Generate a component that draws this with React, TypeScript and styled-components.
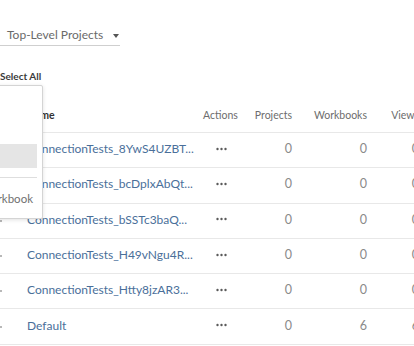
import React from 'react';
import styled, { createGlobalStyle } from 'styled-components';

const GlobalStyle = createGlobalStyle`
  html, body {
    margin: 0;
    padding: 0;
    background: #fff;
  }
  body {
    font-family: Lato, "Open Sans", sans-serif;
    color: #333;
  }
`;

const Page = styled.div`
  position: relative;
  width: 414px;
  height: 346px;
  overflow: hidden;
  background: #fff;
`;

const Toolbar = styled.div`
  padding-top: 27px;
  height: 46px;
  box-sizing: border-box;
`;

const ProjectSelect = styled.div`
  display: flex;
  align-items: center;
  gap: 10px;
  width: 120px;
  box-sizing: border-box;
  padding: 0 0 3px 7px;
  border-bottom: 1px solid #cfcfcf;
  font-size: 12px;
  color: #6a6a6a;
  white-space: nowrap;
`;

const Caret = styled.span`
  width: 0;
  height: 0;
  border-left: 3.5px solid transparent;
  border-right: 3.5px solid transparent;
  border-top: 4px solid #555;
  margin-top: 2px;
`;

const SelectAll = styled.div`
  margin-top: 24px;
  height: 12px;
  line-height: 12px;
  font-size: 10px;
  font-weight: 700;
  color: #3a3a3a;
`;

const Table = styled.div`
  margin-top: 18px;
  width: 440px;
`;

const Row = styled.div<{ $header?: boolean }>`
  display: grid;
  grid-template-columns: 27px 168px 52px 46px 75px 52px;
  align-items: center;
  height: ${({ $header }) => ($header ? '33px' : '35.3px')};
  box-sizing: border-box;
  border-bottom: 1px solid #e8e8e8;
  ${({ $header }) => $header && 'padding-bottom: 3px;'}
`;

const HeaderCell = styled.div<{ $align?: 'left' | 'center' | 'right'; $active?: boolean }>`
  font-size: 10.5px;
  text-align: ${({ $align = 'left' }) => $align};
  font-weight: ${({ $active }) => ($active ? 700 : 400)};
  color: ${({ $active }) => ($active ? '#333' : '#6d6d6d')};
  white-space: nowrap;
  padding-right: 1px;
`;

const Cell = styled.div<{ $align?: 'left' | 'center' | 'right' }>`
  font-size: 12.5px;
  color: #8a8a8a;
  text-align: ${({ $align = 'left' }) => $align};
  white-space: nowrap;
  padding-right: 1px;
  margin-top: -3px;
`;

const Marker = styled.div`
  width: 2px;
  height: 2px;
  border-radius: 1px;
  background: #a0a0a0;
`;

const NameLink = styled.a`
  font-size: 12px;
  color: #4a6f9a;
  text-decoration: none;
  white-space: nowrap;
  margin-top: -3px;
`;

const Dots = styled.svg`
  display: block;
  margin: -3px auto 0;
`;

const Menu = styled.div`
  position: absolute;
  top: 85px;
  left: -150px;
  width: 193px;
  height: 134px;
  box-sizing: border-box;
  padding: 10px 5px 0 0;
  background: #fff;
  border: 1px solid #d4d4d4;
  border-radius: 2px;
  box-shadow: 0 1px 4px rgba(0, 0, 0, 0.12);
  display: flex;
  flex-direction: column;
`;

const MenuItem = styled.div<{ $active?: boolean; $end?: boolean }>`
  height: 24px;
  display: flex;
  align-items: center;
  justify-content: ${({ $end }) => ($end ? 'flex-end' : 'flex-start')};
  padding: 0 4px 0 12px;
  font-size: 11.5px;
  color: #707070;
  background: ${({ $active }) => ($active ? '#e5e5e5' : 'transparent')};
  white-space: nowrap;
`;

const Separator = styled.div`
  height: 1px;
  margin: 9px 0 8px;
  background: #dedede;
`;

const rows = [
  { name: 'ConnectionTests_8YwS4UZBT...', projects: 0, workbooks: 0, views: 0 },
  { name: 'ConnectionTests_bcDplxAbQt...', projects: 0, workbooks: 0, views: 0 },
  { name: 'ConnectionTests_bSSTc3baQ...', projects: 0, workbooks: 0, views: 0 },
  { name: 'ConnectionTests_H49vNgu4R...', projects: 0, workbooks: 0, views: 0 },
  { name: 'ConnectionTests_Htty8jzAR3...', projects: 0, workbooks: 0, views: 0 },
  { name: 'Default', projects: 0, workbooks: 6, views: 6 },
];

const MoreIcon = () => (
  <Dots width="11" height="4" viewBox="0 0 11 4">
    <circle cx="1.5" cy="2" r="1.2" fill="#5a5a5a" />
    <circle cx="5.5" cy="2" r="1.2" fill="#5a5a5a" />
    <circle cx="9.5" cy="2" r="1.2" fill="#5a5a5a" />
  </Dots>
);

export default function App() {
  return (
    <Page>
      <GlobalStyle />
      <Toolbar>
        <ProjectSelect>
          Top-Level Projects
          <Caret />
        </ProjectSelect>
      </Toolbar>
      <SelectAll>Select All</SelectAll>
      <Table>
        <Row $header>
          <div />
          <HeaderCell $active>Name</HeaderCell>
          <HeaderCell $align="center">Actions</HeaderCell>
          <HeaderCell $align="right">Projects</HeaderCell>
          <HeaderCell $align="right">Workbooks</HeaderCell>
          <HeaderCell $align="right">Views</HeaderCell>
        </Row>
        {rows.map((row) => (
          <Row key={row.name}>
            <Marker />
            <NameLink href="#">{row.name}</NameLink>
            <MoreIcon />
            <Cell $align="right">{row.projects}</Cell>
            <Cell $align="right">{row.workbooks}</Cell>
            <Cell $align="right">{row.views}</Cell>
          </Row>
        ))}
      </Table>
      <Menu>
        <MenuItem>Project</MenuItem>
        <MenuItem>Data Source</MenuItem>
        <MenuItem $active>Flow</MenuItem>
        <Separator />
        <MenuItem $end>Workbook</MenuItem>
      </Menu>
    </Page>
  );
}
